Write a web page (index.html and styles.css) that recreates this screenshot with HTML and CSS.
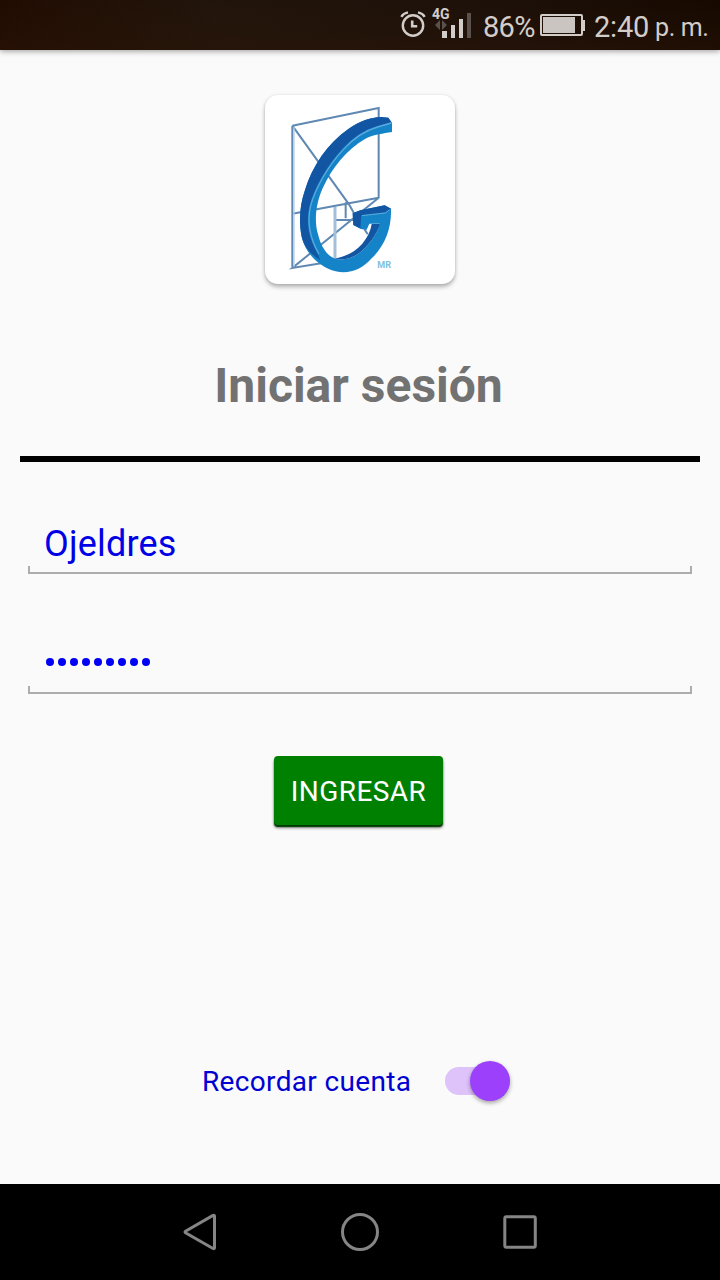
FILE: index.html
```html
<!DOCTYPE html>
<html lang="es">
<head>
<meta charset="utf-8">
<title>Iniciar sesión</title>
<link rel="stylesheet" href="styles.css">
</head>
<body>
<header class="status">
  <svg class="alarm" width="26" height="28" viewBox="0 0 26 28" fill="none" stroke="#d3cdc9" stroke-width="2.4">
    <circle cx="13" cy="15.5" r="10.2"/>
    <path d="M12.2 10.5v5.8h5" stroke-width="2.6"/>
    <path d="M1.3 6.8Q3.5 3.2 8 2.4M24.7 6.800Q22.500 3.200 18 2.400"/>
  </svg>
  <div class="network">
    <span class="network-type">4G</span>
    <svg width="39" height="32" viewBox="0 0 39 32">
      <path d="M2 17l5-5v10zM14 17l-5-5v10z" fill="#5c524d"/>
      <path d="M9 23h5v7H9zM18 17h4v13h-4zM26 11h4v19h-4z" fill="#d3cdc9"/>
      <path d="M34 5h4v25h-4z" fill="#5c524d"/>
    </svg>
  </div>
  <span class="percent">86%</span>
  <svg class="battery" width="46" height="24" viewBox="0 0 46 24">
    <rect x="1" y="2" width="41" height="20" rx="1" fill="none" stroke="#d3cdc9" stroke-width="2"/>
    <path d="M3 4h32v16H3z" fill="#cbc5c1"/>
    <path d="M43 7h2v11h-2z" fill="#d3cdc9"/>
  </svg>
  <span class="clock">2:40</span><span class="meridiem">p. m.</span>
</header>
<main class="login">
  <div class="logo">
    <svg width="190" height="189" viewBox="30 30 570 567" fill="none">
      <g stroke="#5f88b2" stroke-width="6">
        <path d="M112 122L371 69V340M112 122V549M112 122L282 358L300 390M328 432L338 448M112 386L371 338L112 549L240 528M272 352V400M240 405H295"/>
        <path d="M240 366V526" stroke="#a3bfda" stroke-width="9"/>
        <path d="M117 125V545" stroke="#b9cfe4" stroke-width="4"/>
      </g>
      <path d="M377 96L400 98L411 113V141C385 146 358 147 330 162C275 194 232 246 203 310C184 352 176 405 189 448C198 486 216 512 240 521C270 528 301 518 326 493C350 468 366 446 374 416H343L335 434L317 432L295 420L293 385L316 376L389 361L408 371C410 433 389 483 350 520C320 554 281 569 242 559C194 546 152 508 140 455C131 410 134 360 150 315C172 243 218 175 280 132C313 108 350 97 377 96Z" fill="#1583c8"/>
      <path d="M377 96L400 98L409 111L368 123C329 134 293 158 262 191C215 241 178 309 164 360C154 407 156 448 187 505L196 526C165 506 146 482 140 455C131 410 134 360 150 315C172 243 218 175 280 132C313 108 350 97 377 96Z" fill="#1255a2"/>
      <path d="M293 385L316 376L389 361L408 371L391 382L319 390L316 430L295 420ZM350 417H375C366 446 350 468 326 493C301 518 270 528 240 521C270 514 300 502 322 476C338 457 347 437 350 417Z" fill="#1255a2"/>
      <path d="M409 114L368 126C330 137 294 161 265 194C218 244 181 311 167 362C156 410 165 461 192 507" stroke="#5aa9dc" stroke-width="4"/>
      <path d="M404 374L391 384L321 392" stroke="#5aa9dc" stroke-width="3"/>
      <text class="mark" x="367" y="549">MR</text>
    </svg>
  </div>
  <h1 class="title">Iniciar sesión</h1>
  <div class="rule"></div>
  <div class="field"><span class="value">Ojeldres</span></div>
  <div class="field">
    <div class="dots"><i></i><i></i><i></i><i></i><i></i><i></i><i></i><i></i><i></i></div>
  </div>
  <button class="submit">INGRESAR</button>
  <label class="remember"><span class="remember-text">Recordar cuenta</span><span class="switch"><span class="thumb"></span></span></label>
</main>
<nav class="navbar">
  <svg width="40" height="40" viewBox="0 0 40 40"><path d="M34.5 4V36Q34 37 33 36.500L5.500 20.700Q4.500 20 5.500 19.300L33 3.500Q34.500 3 34.500 4Z"/></svg>
  <svg width="40" height="40" viewBox="0 0 40 40"><circle cx="20" cy="20" r="17.500"/></svg>
  <svg width="40" height="40" viewBox="0 0 40 40"><rect x="4.800" y="4.800" width="30.500" height="30.500" rx="1.500"/></svg>
</nav>
</body>
</html>
```
FILE: styles.css
```css
* { box-sizing: border-box; }
body {
  margin: 0;
  width: 720px;
  height: 1280px;
  display: flex;
  flex-direction: column;
  overflow: hidden;
  background: #fafafa;
  font-family: Roboto, "Noto Sans", sans-serif;
}
.status {
  flex: none;
  height: 50px;
  display: flex;
  align-items: flex-start;
  padding-left: 400px;
  background: linear-gradient(to top, rgba(45, 22, 8, .4), transparent), linear-gradient(to right, #210c02, #21150b 30%, #1c1009 70%, #160900);
  box-shadow: 0 1px 6px rgba(0, 0, 0, .4);
  color: #d3cdc9;
  font-size: 29px;
  line-height: 54px;
  white-space: nowrap;
}
.alarm { margin-top: 10px; }
.network {
  position: relative;
  width: 39px;
  height: 32px;
  margin: 8px 11px 0 7px;
}
.network svg { display: block; }
.network-type {
  position: absolute;
  left: -1px;
  top: -1px;
  font-size: 14px;
  line-height: 14px;
  font-weight: 700;
}
.percent { width: 57px; letter-spacing: -.7px; }
.battery { margin-top: 13px; }
.clock { width: 61px; margin-left: 8px; letter-spacing: -.2px; }
.meridiem { font-size: 25px; line-height: 56px; letter-spacing: -.4px; }
.login {
  height: 1134px;
  display: flex;
  flex-direction: column;
  align-items: center;
  padding: 45px 20px 0;
}
.logo {
  width: 190px;
  height: 189px;
  border-radius: 13px;
  background: #fff;
  box-shadow: 0 3px 4px rgba(0, 0, 0, .28), 0 0 3px rgba(0, 0, 0, .1);
}
.logo svg { display: block; }
.mark { font: 700 27px Roboto, sans-serif; fill: #7fc0de; }
.title {
  margin: 72px 3px 0 0;
  height: 60px;
  color: #727272;
  font-size: 48px;
  line-height: 60px;
  font-weight: 700;
}
.rule { width: 680px; height: 6px; margin-top: 40px; background: #000; }
.field {
  width: 664px;
  height: 62px;
  margin-top: 50px;
  padding-left: 16px;
  color: #0000e6;
  font-size: 36px;
  line-height: 65px;
  letter-spacing: .18px;
  background:
    linear-gradient(#adadad, #adadad) left bottom / 2px 8px no-repeat,
    linear-gradient(#adadad, #adadad) right bottom / 2px 8px no-repeat,
    linear-gradient(#adadad, #adadad) left bottom / 100% 2px no-repeat;
}
.field + .field { margin-top: 58px; }
.dots { display: flex; gap: 4px; padding: 26px 0 0 2px; }
.dots i { width: 8px; height: 8px; border-radius: 50%; background: #0000f5; }
.submit {
  width: 169px;
  height: 69px;
  margin: 62px 3px 0 0;
  padding: 1px 0 0;
  border: 0;
  border-radius: 4px;
  background: #008000;
  box-shadow: 0 2px 1px #003c00, 0 3px 3px rgba(0, 0, 0, .5);
  color: #fff;
  font: 28px/69px Roboto, sans-serif;
  letter-spacing: .45px;
}
.remember {
  width: 308px;
  height: 40px;
  margin: 236px 8px 0 0;
  display: flex;
  justify-content: space-between;
  align-items: center;
  color: #0000d2;
  font-size: 28px;
  line-height: 40px;
}
.remember-text { padding-top: 2px; letter-spacing: .34px; }
.switch {
  width: 65px;
  height: 28px;
  display: flex;
  align-items: center;
  justify-content: flex-end;
  border-radius: 14px;
  background: #dec3fa;
}
.thumb {
  width: 40px;
  height: 40px;
  border-radius: 50%;
  background: #9c40fb;
  box-shadow: 0 2px 4px rgba(0, 0, 0, .35);
}
.navbar {
  height: 96px;
  display: flex;
  justify-content: center;
  align-items: center;
  gap: 120px;
  background: #000;
}
.navbar svg { fill: none; stroke: #858585; stroke-width: 3; }
```
